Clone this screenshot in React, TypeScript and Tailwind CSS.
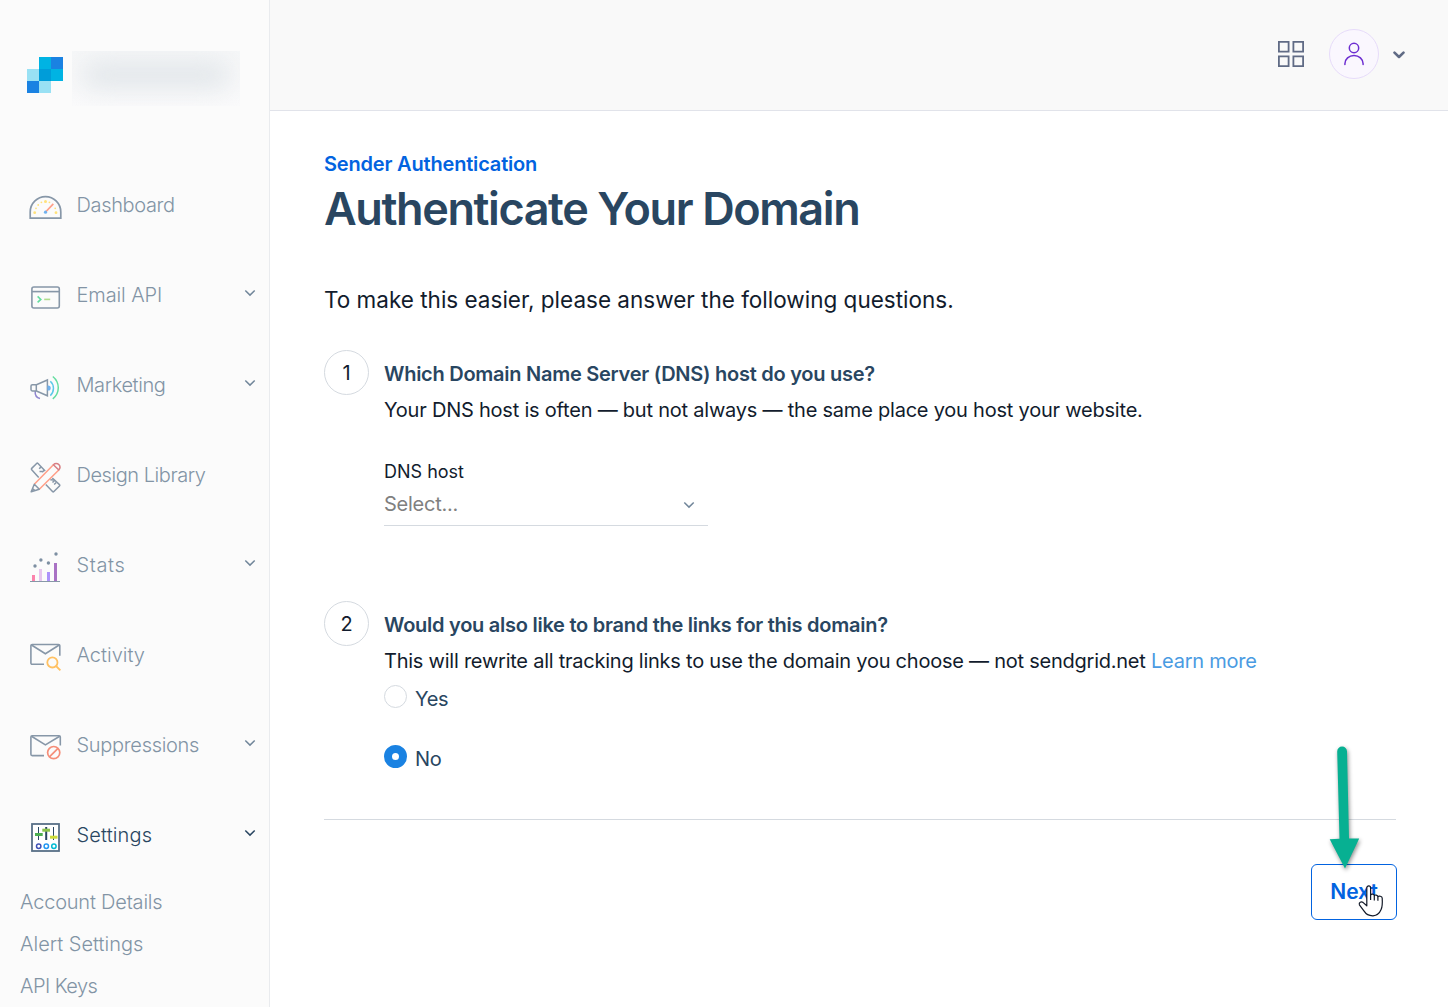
import { useState, type ReactNode } from 'react'

type NavItem = {
  label: string
  icon: ReactNode
  tracking: string
  expandable?: boolean
  active?: boolean
}

const DashboardIcon = () => (
  <svg width="36" height="36" viewBox="0 0 36 36" fill="none">
    <path d="M3.2 29.2V23a15.3 15.3 0 0 1 30.6 0v6.2z" stroke="#8797a8" strokeWidth="1.7" />
    <g fill="#ffe27a">
      <circle cx="7.7" cy="23.7" r="1.4" />
      <circle cx="9" cy="19.3" r=".9" />
      <circle cx="11.2" cy="16" r=".9" />
      <circle cx="14.4" cy="13.3" r=".9" />
      <circle cx="18.5" cy="12.4" r="1.5" />
      <circle cx="22.4" cy="13.3" r=".9" />
      <circle cx="28.2" cy="19.3" r=".9" />
      <circle cx="29" cy="23.7" r="1.4" />
    </g>
    <path d="M18.6 23L26.3 14.8" stroke="#ff9f88" strokeWidth="1.7" />
    <circle cx="18.5" cy="23.2" r="1.6" fill="#6fb1ef" />
  </svg>
)

const EmailApiIcon = () => (
  <svg width="36" height="36" viewBox="0 0 36 36" fill="none" strokeWidth="1.6">
    <rect x="4.9" y="8" width="27.4" height="21" rx="2" stroke="#8797a8" />
    <path d="M5 12.6h27.3" stroke="#8797a8" />
    <path d="M10.6 17.4l3.2 3-3.2 3" stroke="#63dda0" />
    <path d="M17.2 20.4h6" stroke="#b0dc8c" />
  </svg>
)

const MarketingIcon = () => (
  <svg width="36" height="36" viewBox="0 0 36 36" fill="none" strokeWidth="1.5">
    <path d="M8.2 22c-.3 3.6 1.2 6.7 4.8 7.5" stroke="#8f86cf" />
    <path d="M20.4 11v15.8L9.5 22H5.4a1.4 1.4 0 0 1-1.4-1.4v-3.5a1.4 1.4 0 0 1 1.4-1.4h4.1z" stroke="#8797a8" />
    <path d="M9.3 15.8V22" stroke="#8797a8" />
    <path d="M21.2 17.2a1.8 1.8 0 0 1 0 3.6z" fill="#6fb1ef" stroke="#6fb1ef" />
    <path d="M23.3 12.2c4.200 3.600 4.200 10.600 0 14.400" stroke="#5cc9e8" />
    <path d="M25.8 7.5c7.300 6 7.300 16.500 0 22.300" stroke="#63dda0" />
  </svg>
)

const DesignLibraryIcon = () => (
  <svg width="36" height="36" viewBox="0 0 36 36" fill="none" strokeWidth="1.5" strokeLinejoin="round">
    <path d="M18.2 12L11 4.5a1 1 0 0 0-1.4 0L4.7 9.4a1 1 0 0 0 0 1.4l7 7.7" stroke="#8797a8" />
    <path d="M12.2 9.8l1.9-1.9M12.5 12.4h3.2M15.2 13.2l2-2" stroke="#8797a8" />
    <path d="M25.3 19l7.2 6.6a1 1 0 0 1 0 1.4l-5.6 5.5a1 1 0 0 1-1.4 0l-6.7-7" stroke="#8797a8" />
    <path d="M23.3 20.8l3.2.3M25.5 23.5l2.3-2.2M27.2 25.5l2-2" stroke="#8797a8" />
    <path d="M7.3 25.3L26.4 5.7M12.3 30.2L31.8 11" stroke="#ff9f88" />
    <path d="M26.4 5.7c1.7-1.7 4-1.6 5.4-.1s1.5 3.7 0 5.4z" stroke="#d97f84" />
    <path d="M7.3 25.3l5 4.9L4.2 32.8zM5.4 29.5l3 2.3" stroke="#8797a8" />
  </svg>
)

const StatsIcon = () => (
  <svg width="36" height="36" viewBox="0 0 36 36" fill="none">
    <rect x="5" y="26" width="3" height="6" fill="#fb83ac" />
    <rect x="12" y="20" width="3" height="12" fill="#e7c6ee" />
    <rect x="20" y="23" width="3" height="9" fill="#ad93fb" />
    <rect x="27" y="14" width="3" height="18" fill="#a972c4" />
    <path d="M3 32.5h30" stroke="#8797a8" />
    <g fill="#7d8fa2">
      <circle cx="8" cy="17" r="1.7" />
      <circle cx="13.9" cy="11" r="1.7" />
      <circle cx="21.4" cy="14" r="1.7" />
      <circle cx="29" cy="5" r="1.7" />
    </g>
  </svg>
)

const ActivityIcon = () => (
  <svg width="36" height="36" viewBox="0 0 36 36" fill="none" strokeWidth="1.6">
    <path d="M17 25.3H5.2A1.3 1.3 0 0 1 3.9 24V6.8a1.3 1.3 0 0 1 1.3-1.3h26.3a1.3 1.3 0 0 1 1.3 1.3v9.900" stroke="#8797a8" />
    <path d="M4.5 6l13.9 8.7L32.2 6" stroke="#8797a8" />
    <circle cx="25.4" cy="23.4" r="5.1" stroke="#ffc163" strokeWidth="1.8" />
    <path d="M29 27l4.4 4.3" stroke="#ffc163" strokeWidth="1.8" />
  </svg>
)

const SuppressionsIcon = () => (
  <svg width="36" height="36" viewBox="0 0 36 36" fill="none" strokeWidth="1.6">
    <path d="M17 26.6H5.2a1.3 1.3 0 0 1-1.3-1.3V8.1a1.3 1.3 0 0 1 1.3-1.3H32a1.3 1.3 0 0 1 1.3 1.3v8.3" stroke="#8797a8" />
    <path d="M4.5 7.3l13.9 8.6L32.7 7.3" stroke="#8797a8" />
    <circle cx="26.7" cy="23.6" r="6.1" stroke="#f58d78" strokeWidth="1.7" />
    <path d="M22.4 27.9l8.6-8.6" stroke="#f58d78" strokeWidth="1.7" />
  </svg>
)

const SettingsIcon = () => (
  <svg width="36" height="36" viewBox="0 0 36 36" fill="none">
    <rect x="5" y="5" width="27" height="27" fill="#fff" stroke="#586f87" strokeWidth="1.8" />
    <path d="M11.5 8v13M26.5 8v13" stroke="#294661" />
    <path d="M19.2 8v13" stroke="#294661" strokeWidth="2" />
    <rect x="8" y="14" width="7.7" height="3" fill="#4caf50" />
    <rect x="15.3" y="9.7" width="7.7" height="3" fill="#8bc34a" />
    <rect x="23" y="16.7" width="7.5" height="3" fill="#cddc39" />
    <circle cx="11.7" cy="27.3" r="2.2" stroke="#3f51b5" strokeWidth="1.5" />
    <circle cx="19.3" cy="27.3" r="2.2" stroke="#2196f3" strokeWidth="1.5" />
    <circle cx="26.9" cy="27.3" r="2.2" stroke="#00bcd4" strokeWidth="1.5" />
  </svg>
)

const Chevron = ({ className }: { className?: string }) => (
  <svg className={className} width="12" height="8" viewBox="0 0 12 8" fill="none" stroke="currentColor">
    <path d="M1.3 1.5L6 6.1l4.7-4.6" strokeWidth="1.5" />
  </svg>
)

const navItems: NavItem[] = [
  { label: 'Dashboard', icon: <DashboardIcon />, tracking: 'tracking-[-0.35px]' },
  { label: 'Email API', icon: <EmailApiIcon />, tracking: 'tracking-[-0.1px]', expandable: true },
  { label: 'Marketing', icon: <MarketingIcon />, tracking: 'tracking-[-0.4px]', expandable: true },
  { label: 'Design Library', icon: <DesignLibraryIcon />, tracking: 'tracking-[-0.45px]' },
  { label: 'Stats', icon: <StatsIcon />, tracking: 'tracking-[0.6px]', expandable: true },
  { label: 'Activity', icon: <ActivityIcon />, tracking: 'tracking-[0px]' },
  { label: 'Suppressions', icon: <SuppressionsIcon />, tracking: 'tracking-[-0.3px]', expandable: true },
  { label: 'Settings', icon: <SettingsIcon />, tracking: 'tracking-[0.15px]', expandable: true, active: true },
]

const settingsLinks = [
  { label: 'Account Details', tracking: 'tracking-[-0.2px]' },
  { label: 'Alert Settings', tracking: 'tracking-[0px]' },
  { label: 'API Keys', tracking: 'tracking-[-0.55px]' },
]

const Logo = () => (
  <svg width="36" height="36" viewBox="0 0 36 36" shapeRendering="crispEdges">
    <path fill="#00b3e3" d="M12 0h12v12H12zM24 12h12v12H24z" />
    <path fill="#1a82e2" d="M24 0h12v12H24zM0 24h12v12H0z" />
    <path fill="#99e1f4" d="M0 12h12v12H0zM12 24h12v12H12z" />
    <path fill="#009dd9" d="M12 12h12v12H12z" />
  </svg>
)

const Sidebar = () => (
  <aside className="w-[270px] shrink-0 h-full overflow-hidden bg-[#fbfbfb] border-r border-[#e9ebee]">
    <div className="flex h-[160px] pl-[27px] pt-[51px]">
      <div className="pt-1.5">
        <Logo />
      </div>
      {/* Account name, blurred out */}
      <div className="ml-[9px] w-[168px] h-[55px] overflow-hidden bg-linear-to-b from-[#f6f7f8] to-[#fafafb] pt-3 px-2.5">
        <div className="h-6 rounded-full bg-[#dfe4e8] blur-[13px]" />
      </div>
    </div>
    <nav>
      {navItems.map((item) => (
        <a
          key={item.label}
          href="#"
          className={`flex items-center h-[90px] pl-[27px] pr-[13px] text-[20px] ${item.active ? 'text-[#294661]' : 'text-[#8294a5]'}`}
        >
          <span className="mt-1 shrink-0">{item.icon}</span>
          <span className={`ml-[13.5px] font-light ${item.tracking}`}>{item.label}</span>
          {item.expandable && (
            <Chevron className={`ml-auto mb-1 ${item.active ? 'text-[#294661]' : 'text-[#71869a]'}`} />
          )}
        </a>
      ))}
      <ul className="pt-px">
        {settingsLinks.map(({ label, tracking }) => (
          <li key={label} className={`flex items-center h-[42px] pl-5 text-[20px] font-light text-[#8294a5] ${tracking}`}>
            {label}
          </li>
        ))}
      </ul>
    </nav>
  </aside>
)

const Header = () => (
  <header className="flex items-center justify-end h-[111px] pb-0.5 pr-[43px] bg-[#f9f9f9] border-b border-[#e1e3ea]">
    <svg width="26" height="26" viewBox="0 0 26 26" fill="none" stroke="#606b85" strokeWidth="1.8">
      <path d="M.9.9h9.7v9.7H.9zM15.4.9h9.7v9.7h-9.7zM.9 15.4h9.7v9.7H.9zM15.4 15.4h9.7v9.7h-9.7z" />
    </svg>
    <div className="flex items-center justify-center ml-[25px] size-[50px] rounded-full border border-[#e7dcfa] bg-[#faf7fe]">
      <svg width="22" height="24" viewBox="0 0 22 24" fill="none" stroke="#6d2ed1" strokeWidth="1.5" strokeLinecap="round">
        <circle cx="11" cy="6" r="4.7" />
        <path d="M1.9 22.5v-.8a9.1 8.3 0 0 1 18.2 0v.8" />
      </svg>
    </div>
    <svg className="ml-[14px] mt-0.5" width="12" height="8" viewBox="0 0 12 8" fill="none" stroke="#606b85" strokeWidth="2.6" strokeLinecap="round" strokeLinejoin="round">
      <path d="M1.5 1.6L6 6l4.5-4.4" />
    </svg>
  </header>
)

type QuestionProps = {
  step: number
  title: ReactNode
  children: ReactNode
}

const Question = ({ step, title, children }: QuestionProps) => (
  <section className="flex h-[251px]">
    <div className="flex items-center justify-center size-[45px] shrink-0 rounded-full border border-[#d5dae0] text-[20px]">
      {step}
    </div>
    <div className="ml-[15px] pt-1.5">
      <h2 className="text-[20px] leading-9 font-semibold tracking-[-0.26px] text-[#294661]">{title}</h2>
      {children}
    </div>
  </section>
)

const Radio = ({ label, checked, onChange }: { label: string; checked: boolean; onChange: () => void }) => (
  <label className="relative flex h-[60px] text-[20px] leading-[30px] tracking-[-0.3px] text-[#294661]">
    <input type="radio" name="brand-links" className="sr-only" checked={checked} onChange={onChange} />
    <span
      className={`mt-1.5 size-[23px] rounded-full ${checked ? 'border-8 border-[#1a82e2] bg-white' : 'border border-[#d5dae0]'}`}
    />
    <span className="ml-2 mt-[5px]">{label}</span>
  </label>
)

const HandCursor = () => (
  <svg className="absolute left-[46px] top-5" width="26" height="32" viewBox="0 0 26 32" fill="#fff" stroke="#111827" strokeWidth="1.2" strokeLinejoin="round">
    <path d="M8.800 2.900c0-2.600 3.800-2.600 3.800 0v7.200c.6-1.500 3.600-1.300 3.700.6.800-1.200 3.300-.8 3.600 1 1-1 4.100-.7 4.300 1.300.3 4.800.2 8.800-1.100 11.600-1.500 3.600-3.600 6-8.100 6.200-4.300.1-7-1.600-9.100-4.900L1.400 19.800c-.8-2.300 1.800-3.700 3.800-2.200l3.600 3.200z" />
    <path d="M12.600 10.100v5M16.300 10.700v4.800M19.900 11.700v4" fill="none" />
  </svg>
)

const Arrow = () => (
  <svg className="absolute left-[13px] -top-[123px] drop-shadow-[1px_2px_2px_rgba(0,0,0,0.45)]" width="40" height="130" viewBox="0 0 40 130" fill="#07b092">
    <path d="M12.2 9.5a4.9 4.9 0 0 1 9.8 0L24 96.500h10.200L20 126.500 4.700 97.300l9.800-.5z" />
  </svg>
)

const App = () => {
  const [brandLinks, setBrandLinks] = useState(false)

  return (
    <div className="flex w-full h-[1007px] overflow-hidden bg-white font-['Inter','Liberation_Sans',sans-serif]">
      <Sidebar />
      <div className="flex-1 min-w-0">
        <Header />
        <main className="pl-[54px] pr-[52px] pt-[38px] text-[#121c2d]">
          <a href="#" className="block text-[20px] leading-[30px] font-semibold tracking-[-0.18px] text-[#0263e0]">
            Sender Authentication
          </a>
          <h1 className="text-[45px] leading-[60px] font-semibold tracking-[-1.4px] text-[#294661]">Authenticate Your Domain</h1>
          <p className="mt-[43px] text-[22.5px] leading-9">To make this easier, please answer the following questions.</p>

          <div className="mt-8 h-[470px] border-b border-[#d5dae0]">
            <Question step={1} title="Which Domain Name Server (DNS) host do you use?">
              <p className="text-[20px] leading-9 tracking-[-0.22px]">
                Your DNS host is often — but not always — the same place you host your website.
              </p>
              <div className="mt-[30px] w-[324px] border-b border-[#d5dae0]">
                <p className="text-[18px] leading-[27px]">DNS host</p>
                <div className="flex items-center justify-between h-10 pr-[13px] text-[20px] tracking-[-0.25px] text-[#808080]">
                  <span className="mb-0.5">Select...</span>
                  <Chevron className="text-[#71869a]" />
                </div>
              </div>
            </Question>
            <Question step={2} title="Would you also like to brand the links for this domain?">
              <p className="text-[20px] leading-9 tracking-[-0.24px]">
                This will rewrite all tracking links to use the domain you choose — not sendgrid.net{' '}
                <a href="#" className="text-[#4a9be2]">Learn more</a>
              </p>
              <Radio label="Yes" checked={brandLinks} onChange={() => setBrandLinks(true)} />
              <Radio label="No" checked={!brandLinks} onChange={() => setBrandLinks(false)} />
            </Question>
          </div>

          <div className="flex justify-end mt-[44px] -mr-px">
            <button className="relative w-[86px] h-[56px] rounded-md border border-[#0263e0] text-[21px] font-semibold text-[#0263e0]">
              Next
              <HandCursor />
              <Arrow />
            </button>
          </div>
        </main>
      </div>
    </div>
  )
}

export default App
